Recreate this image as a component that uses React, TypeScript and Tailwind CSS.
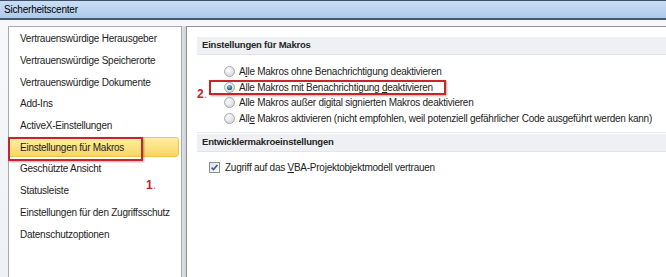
import React from "react";

const FONT = { fontFamily: '"Liberation Sans", Arial, sans-serif' };

const NAV = [
  "Vertrauenswürdige Herausgeber",
  "Vertrauenswürdige Speicherorte",
  "Vertrauenswürdige Dokumente",
  "Add-Ins",
  "ActiveX-Einstellungen",
  "Einstellungen für Makros",
  "Geschützte Ansicht",
  "Statusleiste",
  "Einstellungen für den Zugriffsschutz",
  "Datenschutzoptionen",
];

function Radio({ checked }: { checked?: boolean }) {
  return (
    <svg width="11" height="11" viewBox="0 0 11 11" className="shrink-0">
      <defs>
        <radialGradient id="rb" cx="0.4" cy="0.35" r="0.7">
          <stop offset="0" stopColor="#ffffff" />
          <stop offset="1" stopColor="#d2d4d6" />
        </radialGradient>
        <radialGradient id="rd" cx="0.4" cy="0.35" r="0.7">
          <stop offset="0" stopColor="#7fc4ea" />
          <stop offset="1" stopColor="#134c7d" />
        </radialGradient>
      </defs>
      <circle cx="5.5" cy="5.5" r="5" fill="url(#rb)" stroke="#a3a5a8" strokeWidth="0.9" />
      {checked && <circle cx="5.5" cy="5.5" r="2.6" fill="url(#rd)" />}
    </svg>
  );
}

function Check() {
  return (
    <svg width="11" height="11" viewBox="0 0 11 11" className="shrink-0">
      <defs>
        <linearGradient id="cb" x1="0" y1="0" x2="1" y2="1">
          <stop offset="0" stopColor="#dcdfe3" />
          <stop offset="1" stopColor="#ffffff" />
        </linearGradient>
      </defs>
      <rect x="0.5" y="0.5" width="10" height="10" fill="url(#cb)" stroke="#8e8f8f" />
      <path d="M2.6 5.6 L4.5 7.6 L8.4 2.9" fill="none" stroke="#3b5a9a" strokeWidth="1.6" />
    </svg>
  );
}

function Header({ children }: { children: React.ReactNode }) {
  return (
    <div className="h-[18px] bg-[#eef0f3] border-b border-[#e2e4e8] pl-[5px] flex items-center text-[9.5px] tracking-[-0.2px] font-bold text-[#262626]">
      {children}
    </div>
  );
}

export default function App() {
  return (
    <div className="w-[666px] h-[277px] bg-[#eef1f5] overflow-hidden flex flex-col text-[#1e1e1e] whitespace-nowrap" style={FONT}>
      <div className="h-[20px] shrink-0 border-t border-[#3d5266] border-b-2 border-b-[#44596d] bg-gradient-to-b from-[#cadef4] to-[#aecbec] pl-[4px] flex items-center text-[10px] tracking-[-0.2px] text-black">
        Sicherheitscenter
      </div>
      <div className="flex-1 flex pt-[6px] bg-gradient-to-b from-[#f7f8fa] to-[#eef1f5]">
        <div className="w-[8px] shrink-0" />
        <div className="relative w-[174px] shrink-0 bg-white border border-[#a7abb0] border-b-0 pt-[1px] text-[10px] tracking-[-0.25px]">
          {NAV.map((t, i) => (
            <div key={t} className="h-[21.7px] flex items-center">
              {i === 5 ? (
                <div className="h-[20px] w-[171px] -ml-px rounded-r-[3px] border border-[#f0c64a] bg-gradient-to-b from-[#fdeea5] to-[#f9d75e] flex items-center pl-[11px]">
                  {t}
                </div>
              ) : (
                <div className="pl-[11px]">{t}</div>
              )}
            </div>
          ))}
          <div className="absolute left-[-1px] top-[110px] w-[135px] h-[24px] border-2 border-[#c8242b] shadow-[1px_1px_2px_rgba(0,0,0,0.35)]" />
          <div className="absolute left-[137px] top-[149px] text-[12px] font-bold tracking-normal text-[#c0262c]">
            1<span className="text-[#9a8c8c] font-normal">.</span>
          </div>
        </div>
        <div className="w-[4px] shrink-0 bg-gradient-to-r from-[#dfe1e4] to-[#cfd2d6]" />
        <div className="relative flex-1 bg-white border-t border-l border-[#8d9196] pt-[10px] pl-[10px] text-[10px] tracking-[-0.25px]">
          <Header>Einstellungen für Makros</Header>
          <div className="pl-[27px] pt-[9px] flex flex-col">
            <div className="h-[15.5px] flex items-center gap-[4px]">
              <Radio />
              <span>A<u>l</u>le Makros ohne Benachrichtigung deaktivieren</span>
            </div>
            <div className="h-[15.5px] flex items-center gap-[4px]">
              <Radio checked />
              <span>Alle Makros mit Benachrichtigung <u>d</u>eaktivieren</span>
            </div>
            <div className="h-[15.5px] flex items-center gap-[4px]">
              <Radio />
              <span>Alle Makros außer di<u>g</u>ital signierten Makros deaktivieren</span>
            </div>
            <div className="h-[15.5px] flex items-center gap-[4px]">
              <Radio />
              <span>All<u>e</u> Makros aktivieren (nicht empfohlen, weil potenziell gefährlicher Code ausgeführt werden kann)</span>
            </div>
          </div>
          <div className="mt-[6px] border-t border-[#e6e8eb] pt-[1px]">
            <Header>Entwicklermakroeinstellungen</Header>
          </div>
          <div className="pl-[12px] pt-[8px] flex items-center gap-[5px]">
            <Check />
            <span>Zugriff auf das <u>V</u>BA-Projektobjektmodell vertrauen</span>
          </div>
          <div className="absolute left-[22px] top-[53px] w-[237px] h-[15px] border-2 border-[#c8242b] shadow-[1px_1px_2px_rgba(0,0,0,0.35)]" />
          <div className="absolute left-[10px] top-[58px] text-[12px] font-bold tracking-normal text-[#c0262c]">
            2<span className="text-[#9a8c8c] font-normal">.</span>
          </div>
        </div>
      </div>
    </div>
  );
}
